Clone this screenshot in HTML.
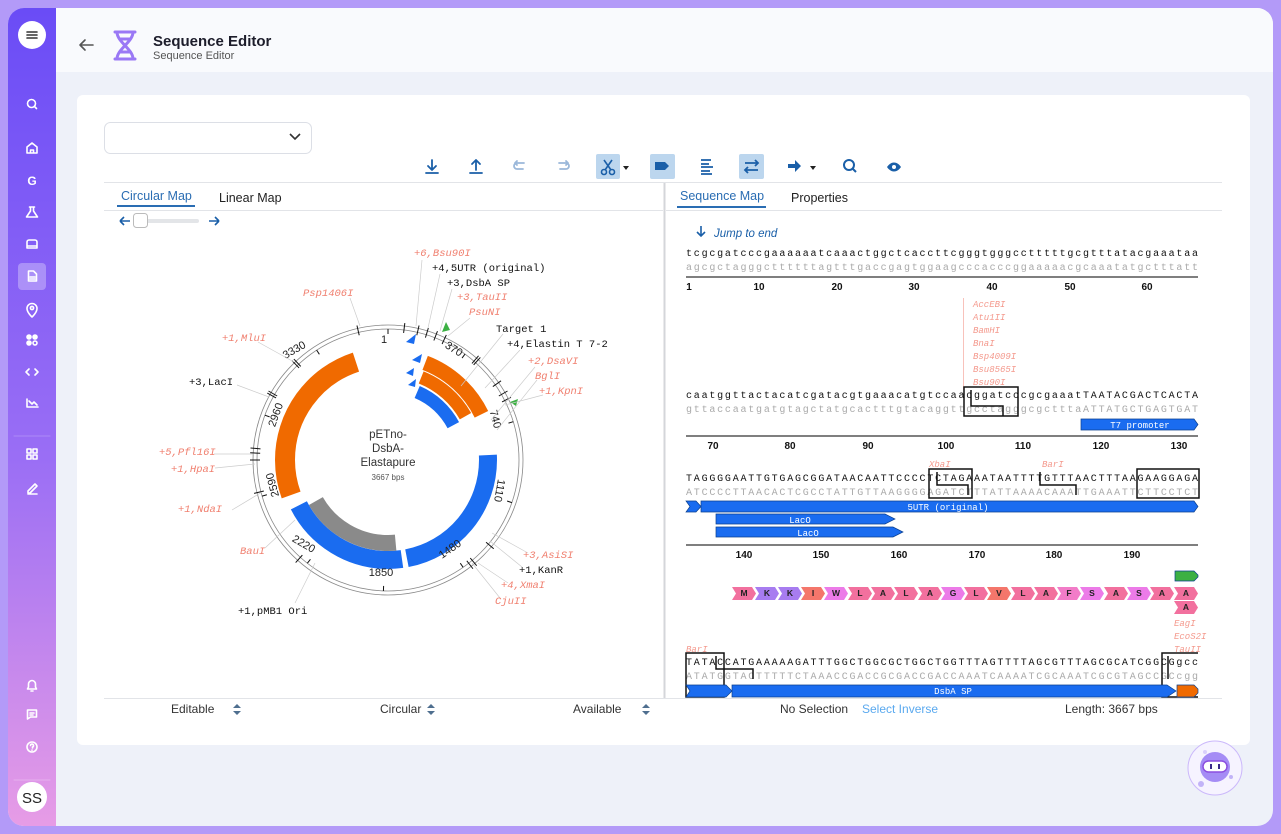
<!DOCTYPE html>
<html><head><meta charset="utf-8"><style>
*{margin:0;padding:0;box-sizing:border-box}
body{width:1281px;height:834px;overflow:hidden;background:#b39af8;font-family:"Liberation Sans",sans-serif;position:relative}
.frame{position:absolute;left:8px;top:8px;width:1265px;height:818px;border-radius:16px;overflow:hidden;background:#eef1f9}
.side{position:absolute;left:0;top:0;width:48px;height:818px;background:linear-gradient(180deg,#6a4cf6 0%,#9a6ef5 55%,#e79ce6 100%)}
.hdr{position:absolute;left:48px;top:0;right:0;height:64px;background:#f9fafd}
.card{position:absolute;left:69px;top:87px;width:1173px;height:650px;background:#fff;border-radius:6px}
</style></head><body>
<div class="frame">
<div class="side">
<svg width="48" height="818" viewBox="0 0 48 818" fill="none" stroke="#fff" stroke-width="1.6" stroke-linecap="round" stroke-linejoin="round">
<circle cx="24" cy="27" r="14" fill="#fff" stroke="none"/>
<path d="M19 24h10M19 27h10M19 30h10" stroke="#333"/>
<circle cx="23.5" cy="95.5" r="4"/><path d="M26.5 98.5l2 2"/>
<path d="M19 139l5-4 5 4v6h-10z M22.5 145v-3h3v3"/>
<text x="24" y="177" fill="#fff" stroke="none" font-size="12" text-anchor="middle" font-weight="bold" font-family="Liberation Sans">G</text>
<path d="M21.5 199h5M22.5 199v4l-4 6h11l-4-6v-4"/>
<path d="M19 238v-4a2 2 0 0 1 2-2h6a2 2 0 0 1 2 2v4h-10z M19 238v2h10v-2"/>
<rect x="10" y="255" width="28" height="27" rx="4" fill="rgba(255,255,255,.3)" stroke="none"/>
<path d="M20.5 263h5l3 3v7h-8z M22 269h5M22 271h5"/>
<path d="M24 309s-5-4.5-5-8.5a5 5 0 0 1 10 0c0 4-5 8.5-5 8.5z"/><circle cx="24" cy="300" r="1.6"/>
<circle cx="21" cy="329" r="2" fill="#fff"/><circle cx="27" cy="329" r="2" fill="#fff"/><circle cx="21" cy="335" r="2" fill="#fff"/><circle cx="27" cy="335" r="2"/>
<path d="M21 361l-3 3 3 3M27 361l3 3-3 3"/>
<path d="M19 391v8h11M21 393l3 3 2-2 3 3"/>
<line x1="6" y1="428" x2="42" y2="428" stroke="rgba(255,255,255,.2)" stroke-width="1"/>
<rect x="19" y="441" width="4" height="4"/><rect x="25" y="441" width="4" height="4"/><rect x="19" y="447" width="4" height="4"/><rect x="25" y="447" width="4" height="4"/>
<path d="M20 483l7-7 2 2-7 7h-2z M20 486h9"/>
<path d="M20.5 679v-3a3.5 3.5 0 0 1 7 0v3l1 2h-9z M23 683h2"/>
<path d="M19.5 702h9v7h-6l-3 2z M22 705h4M22 707h3"/>
<circle cx="24" cy="739" r="5"/><path d="M22.5 737.5a1.5 1.5 0 1 1 2 1.5v1M24 742v.2"/>
<line x1="6" y1="772" x2="42" y2="772" stroke="rgba(255,255,255,.25)" stroke-width="1"/>
<circle cx="24" cy="789" r="15" fill="#fff" stroke="none"/>
<text x="24" y="795" fill="#222" stroke="none" font-size="15" text-anchor="middle" font-family="Liberation Sans">SS</text>
</svg>
</div>
<div class="hdr">
<svg width="300" height="64" style="position:absolute;left:0;top:0" fill="none">
<path d="M24 37h13M24 37l5-5M24 37l5 5" stroke="#555" stroke-width="1.6" stroke-linecap="round"/>
<path d="M59 24h20M59 51h20M61 24c0 10 16 17 16 27M77 24c0 10-16 17-16 27M65 31h9M64 44h10" stroke="#9a78f5" stroke-width="3" stroke-linecap="round"/>
<text x="97" y="38" font-size="15" font-weight="bold" fill="#1d1d2b" font-family="Liberation Sans">Sequence Editor</text>
<text x="97" y="51" font-size="11" fill="#555" font-family="Liberation Sans">Sequence Editor</text>
</svg>
</div>
<div class="card"></div>
</div>

<svg width="1281" height="834" style="position:absolute;left:0;top:0" font-family="Liberation Sans">
<rect x="104.5" y="122.5" width="207" height="31" rx="6" fill="#fff" stroke="#dcdfe6"/>
<path d="M290 134l5 5 5-5" stroke="#333" stroke-width="1.6" fill="none"/>
<g fill="none" stroke="#1a5fa8" stroke-width="1.8" stroke-linecap="round" stroke-linejoin="round">
<path d="M432 160v10M428 166l4 4 4-4M426 173h12"/>
<path d="M476 170v-10M472 164l4-4 4 4M470 173h12"/>
<path d="M523 169h-6a3 3 0 0 1 0-6h7M515 163l2-2M515 163l2 2" stroke="#9bb8da"/>
<path d="M560 169h6a3 3 0 0 0 0-6h-7M568 163l-2-2M568 163l-2 2" stroke="#9bb8da"/>
</g>
<rect x="596" y="154" width="24" height="25" rx="2" fill="#bcd6ee"/>
<g fill="none" stroke="#1a5fa8" stroke-width="1.6"><circle cx="604" cy="172" r="2.5"/><circle cx="612" cy="172" r="2.5"/><path d="M605 170l7-10M611 170l-7-10"/></g>
<path d="M623 166h6l-3 4z" fill="#222"/>
<rect x="650" y="154" width="25" height="25" rx="2" fill="#bcd6ee"/>
<path d="M655 162h10l4 4-4 4h-10z" fill="#1a5fa8"/>
<g stroke="#1a5fa8" stroke-width="1.8"><path d="M701 160h10M701 164h8M701 167h12M701 171h9M701 174h11"/></g>
<rect x="739" y="154" width="25" height="25" rx="2" fill="#bcd6ee"/>
<g fill="none" stroke="#1a5fa8" stroke-width="1.8"><path d="M745 163h13M755 160l3 3-3 3M758 170h-13M748 167l-3 3 3 3"/></g>
<path d="M788 164h7v-4l6 6-6 6v-4h-7z" fill="#1a5fa8"/>
<path d="M810 166h6l-3 4z" fill="#222"/>
<circle cx="849" cy="165" r="5" fill="none" stroke="#1a5fa8" stroke-width="2"/><path d="M853 169l3 3" stroke="#1a5fa8" stroke-width="2"/>
<path d="M887 167c4-6 10-6 14 0-4 6-10 6-14 0z" fill="#1a5fa8"/><circle cx="894" cy="167" r="2" fill="#fff"/>
<line x1="104" y1="182.5" x2="1222" y2="182.5" stroke="#e2e4e8"/>
<line x1="104" y1="210.5" x2="663" y2="210.5" stroke="#e2e4e8"/>
<line x1="666" y1="210.5" x2="1222" y2="210.5" stroke="#e2e4e8"/>
<line x1="664.5" y1="183" x2="664.5" y2="698" stroke="#d4d6da" stroke-width="2"/>
<line x1="104" y1="698.5" x2="1222" y2="698.5" stroke="#e2e4e8"/>
<text x="121" y="200" font-size="12.5" fill="#2a6db3">Circular Map</text>
<rect x="117" y="205" width="78" height="2" fill="#2a6db3"/>
<text x="219" y="202" font-size="12.5" fill="#222">Linear Map</text>
<text x="680" y="200" font-size="12.5" fill="#2a6db3">Sequence Map</text>
<rect x="677" y="206" width="89" height="2" fill="#2a6db3"/>
<text x="791" y="202" font-size="12.5" fill="#222">Properties</text>
<path d="M120 221h10M120 221l4-4M120 221l4 4M219 221h-10M219 221l-4-4M219 221l-4 4" stroke="#1a5fa8" stroke-width="1.6" fill="none"/>
<rect x="140" y="219" width="59" height="4" rx="2" fill="#e3e5e8"/>
<rect x="133.5" y="213.5" width="14" height="14" rx="3" fill="#fff" stroke="#bbb"/>
<g transform="translate(388 460)">
<circle r="135" fill="none" stroke="#888" stroke-width="0.8"/>
<circle r="131" fill="none" stroke="#888" stroke-width="0.8"/>
<g transform="rotate(-90)" fill="none">
<circle r="103" stroke="#f06a00" stroke-width="20" stroke-dasharray="164.8 1000" stroke-dashoffset="-449.5"/>
<circle r="100" stroke="#1a6cf0" stroke-width="18" stroke-dasharray="124 1000" stroke-dashoffset="-300"/>
<circle r="83" stroke="#8a8a8a" stroke-width="16" stroke-dasharray="95 1000" stroke-dashoffset="-253"/>
<circle r="100" stroke="#1a6cf0" stroke-width="18" stroke-dasharray="143 1000" stroke-dashoffset="-152"/>
<circle r="104" stroke="#f06a00" stroke-width="15" stroke-dasharray="78 1000" stroke-dashoffset="-38"/>
<circle r="89" stroke="#f06a00" stroke-width="13" stroke-dasharray="60 1000" stroke-dashoffset="-34"/>
<circle r="74" stroke="#1a6cf0" stroke-width="13" stroke-dasharray="50 1000" stroke-dashoffset="-30"/>
</g>
<path d="M18 -118l10 -8 -2 10zM24 -100l10 -6 -2 9zM18 -87l8 -5 -1 8zM20 -75l8 -6 -1 8z" fill="#1a6cf0"/>
<g stroke="#111" stroke-width="1">
<line y1="-128" y2="-138" transform="rotate(7)"/><line y1="-128" y2="-138" transform="rotate(13)"/><line y1="-128" y2="-138" transform="rotate(17)"/><line y1="-128" y2="-138" transform="rotate(21)"/><line y1="-128" y2="-138" transform="rotate(25)"/>
<line y1="-128" y2="-138" transform="rotate(41)"/><line y1="-128" y2="-138" transform="rotate(42)"/><line y1="-128" y2="-138" transform="rotate(55)"/><line y1="-128" y2="-138" transform="rotate(60)"/><line y1="-128" y2="-138" transform="rotate(63)"/>
<line y1="-128" y2="-138" transform="rotate(347)"/><line y1="-128" y2="-138" transform="rotate(316)"/><line y1="-128" y2="-138" transform="rotate(317)"/><line y1="-128" y2="-138" transform="rotate(299)"/><line y1="-128" y2="-138" transform="rotate(300)"/>
<line y1="-128" y2="-138" transform="rotate(273)"/><line y1="-128" y2="-138" transform="rotate(275)"/><line y1="-128" y2="-138" transform="rotate(270)"/><line y1="-128" y2="-138" transform="rotate(256)"/><line y1="-128" y2="-138" transform="rotate(222)"/>
<line y1="-128" y2="-138" transform="rotate(130)"/><line y1="-128" y2="-138" transform="rotate(140)"/><line y1="-128" y2="-138" transform="rotate(142)"/>
<line y1="-126" y2="-131" transform="rotate(0)"/><line y1="-126" y2="-131" transform="rotate(36)"/><line y1="-126" y2="-131" transform="rotate(73)"/><line y1="-126" y2="-131" transform="rotate(109)"/><line y1="-126" y2="-131" transform="rotate(145)"/><line y1="-126" y2="-131" transform="rotate(182)"/><line y1="-126" y2="-131" transform="rotate(218)"/><line y1="-126" y2="-131" transform="rotate(254)"/><line y1="-126" y2="-131" transform="rotate(290)"/><line y1="-126" y2="-131" transform="rotate(327)"/>
</g>
<path d="M54 -128l4 -10 4 8z" fill="#3cb043"/>
<path d="M122 -58l8 -3 -2 7z" fill="#3cb043"/>
</g>
<g font-size="11" fill="#222" text-anchor="middle">
<text x="384" y="343">1</text>
<text transform="translate(296 353) rotate(-30)">3330</text>
<text transform="translate(452 352) rotate(32)">370</text>
<text transform="translate(492 420) rotate(75)">740</text>
<text transform="translate(279 416) rotate(-70)">2960</text>
<text transform="translate(276 484) rotate(-105)">2590</text>
<text transform="translate(496 490) rotate(100)">1110</text>
<text transform="translate(302 547) rotate(30)">2220</text>
<text x="381" y="576">1850</text>
<text transform="translate(452 552) rotate(-35)">1480</text>
</g>
<g text-anchor="middle" fill="#333"><text x="388" y="438" font-size="11.5">pETno-</text><text x="388" y="452" font-size="11.5">DsbA-</text><text x="388" y="466" font-size="11.5">Elastapure</text><text x="388" y="480" font-size="8" fill="#555">3667 bps</text></g>
<g stroke="#ccc" stroke-width="0.7" fill="none">
<path d="M422 260l-6 66M440 274l-12 54M452 289l-12 42M470 318l-22 18M503 334l-42 52M520 350l-35 38M535 367l-44 53M537 380l-40 50M543 395l-38 10M350 298l10 28M258 342l36 20M237 385l32 12M214 454l40 0M215 468l40 -4M232 510l30 -18M265 548l30 -28M295 603l20 -40M528 553l-36 -20M522 567l-32 -26M508 583l-30 -20M500 598l-28 -35"/>
</g>
<g font-family="Liberation Mono" font-size="10.5">
<g fill="#f08070" font-style="italic">
<text x="414" y="256">+6,Bsu90I</text><text x="457" y="300">+3,TauII</text><text x="469" y="315">PsuNI</text>
<text x="528" y="364">+2,DsaVI</text><text x="535" y="379">BglI</text><text x="539" y="394">+1,KpnI</text>
<text x="303" y="296">Psp1406I</text><text x="222" y="341">+1,MluI</text><text x="159" y="455">+5,Pfl16I</text>
<text x="171" y="472">+1,HpaI</text><text x="178" y="512">+1,NdaI</text><text x="240" y="554">BauI</text>
<text x="523" y="558">+3,AsiSI</text><text x="501" y="588">+4,XmaI</text><text x="495" y="604">CjuII</text>
</g>
<g fill="#111">
<text x="432" y="271">+4,5UTR (original)</text><text x="447" y="286">+3,DsbA SP</text><text x="496" y="332">Target 1</text>
<text x="507" y="347">+4,Elastin T 7-2</text><text x="189" y="385">+3,LacI</text><text x="238" y="614">+1,pMB1 Ori</text><text x="519" y="573">+1,KanR</text>
</g>
</g>
<path d="M701 226v10M697 232l4 4 4-4" stroke="#1a5fa8" stroke-width="1.6" fill="none"/>
<text x="714" y="237" font-size="11.5" font-style="italic" fill="#1a5fa8">Jump to end</text>
<g font-family="Liberation Mono" font-size="10">
<text x="686" y="256" textLength="512" lengthAdjust="spacing" fill="#111">tcgcgatcccgaaaaaatcaaactggctcaccttcgggtgggcctttttgcgtttatacgaaataa</text>
<text x="686" y="270" textLength="512" lengthAdjust="spacing" fill="#aaa">agcgctagggcttttttagtttgaccgagtggaagcccacccggaaaaacgcaaatatgctttatt</text>
<text x="686" y="398" textLength="512" lengthAdjust="spacing" fill="#111">caatggttactacatcgatacgtgaaacatgtccaacggatcccgcgaaatTAATACGACTCACTA</text>
<text x="686" y="412" textLength="512" lengthAdjust="spacing" fill="#aaa">gttaccaatgatgtagctatgcactttgtacaggttgcctagggcgctttaATTATGCTGAGTGAT</text>
<text x="686" y="481" textLength="512" lengthAdjust="spacing" fill="#111">TAGGGGAATTGTGAGCGGATAACAATTCCCCTCTAGAAATAATTTTGTTTAACTTTAAGAAGGAGA</text>
<text x="686" y="495" textLength="512" lengthAdjust="spacing" fill="#aaa">ATCCCCTTAACACTCGCCTATTGTTAAGGGGAGATCTTTATTAAAACAAATTGAAATTCTTCCTCT</text>
<text x="686" y="665" textLength="512" lengthAdjust="spacing" fill="#111">TATACCATGAAAAAGATTTGGCTGGCGCTGGCTGGTTTAGTTTTAGCGTTTAGCGCATCGGCGgcc</text>
<text x="686" y="679" textLength="512" lengthAdjust="spacing" fill="#aaa">ATATGGTACTTTTTCTAAACCGACCGCGACCGACCAAATCAAAATCGCAAATCGCGTAGCCGCcgg</text>
</g>
<g stroke="#333" stroke-width="1.2"><line x1="686" y1="277" x2="1198" y2="277"/><line x1="686" y1="436" x2="1198" y2="436"/><line x1="686" y1="545" x2="1198" y2="545"/></g>
<g font-size="10" font-weight="bold" fill="#111" text-anchor="middle">
<text x="689" y="290">1</text><text x="759" y="290">10</text><text x="837" y="290">20</text><text x="914" y="290">30</text><text x="992" y="290">40</text><text x="1070" y="290">50</text><text x="1147" y="290">60</text>
<text x="713" y="449">70</text><text x="790" y="449">80</text><text x="868" y="449">90</text><text x="946" y="449">100</text><text x="1023" y="449">110</text><text x="1101" y="449">120</text><text x="1179" y="449">130</text>
<text x="744" y="558">140</text><text x="821" y="558">150</text><text x="899" y="558">160</text><text x="977" y="558">170</text><text x="1054" y="558">180</text><text x="1132" y="558">190</text>
</g>
<g font-family="Liberation Mono" font-size="9" font-style="italic" fill="#f49a8e">
<text x="973" y="307">AccEBI</text><text x="973" y="320">Atu1II</text><text x="973" y="333">BamHI</text><text x="973" y="346">BnaI</text><text x="973" y="359">Bsp4009I</text><text x="973" y="372">Bsu8565I</text><text x="973" y="385">Bsu90I</text>
<text x="929" y="467">XbaI</text><text x="1042" y="467">BarI</text>
<text x="1174" y="626">EagI</text><text x="1174" y="639">EcoS2I</text><text x="1174" y="652">TauII</text><text x="686" y="652">BarI</text>
</g>
<line x1="963.5" y1="298" x2="963.5" y2="390" stroke="#f6b3aa" stroke-width="0.8"/>
<g fill="none" stroke="#111" stroke-width="1.5">
<rect x="964" y="387" width="54" height="29"/><path d="M971 390v16h32v10"/>
<rect x="929" y="469" width="43" height="29"/><path d="M937 472v13h31v10"/><path d="M1040 472v13h36v10"/>
<rect x="1137" y="469" width="62" height="29"/>
<rect x="686" y="653" width="38" height="44"/><path d="M716 656v13h37v10"/>
<path d="M1198 653h-36v44h36M1168 656v23"/>
</g>
<g font-size="9" fill="#fff" text-anchor="middle" stroke="#0a3f8e" stroke-width="0.7">
<path d="M1081 419h113l4 5.5-4 5.5h-113z" fill="#1a6cf0"/>
<path d="M686 501h10l5 5.5-5 5.5h-10l4-5.5z" fill="#1a6cf0"/>
<path d="M701 501h493l4 5.5-4 5.5h-493z" fill="#1a6cf0"/>
<path d="M716 514h169l10 5-10 5h-169z" fill="#1a6cf0"/>
<path d="M716 527h177l10 5-10 5h-177z" fill="#1a6cf0"/>
<path d="M686 685h40l6 6-6 6h-40l4-6z" fill="#1a6cf0"/>
<path d="M732 685h435l9 6-9 6h-435z" fill="#1a6cf0"/>
<path d="M1177 685h17l4 4v4l-4 4h-17z" fill="#f06a00"/>
<path d="M1175 571h19l4 4v2l-4 4h-19z" fill="#3cb043"/>
</g>
<g font-size="9" fill="#fff" text-anchor="middle" font-family="Liberation Mono">
<text x="1140" y="428">T7 promoter</text><text x="948" y="510">5UTR (original)</text><text x="800" y="523">LacO</text><text x="808" y="536">LacO</text><text x="953" y="694">DsbA SP</text>
</g>
<g font-size="8.5" font-weight="bold" fill="#222" text-anchor="middle">
<path d="M732 587h20l4 6.5-4 6.5h-20l4-6.5z" fill="#f2709e"/><text x="744" y="596">M</text>
<path d="M755 587h20l4 6.5-4 6.5h-20l4-6.5z" fill="#a77cf0"/><text x="767" y="596">K</text>
<path d="M778 587h20l4 6.5-4 6.5h-20l4-6.5z" fill="#a77cf0"/><text x="790" y="596">K</text>
<path d="M801 587h20l4 6.5-4 6.5h-20l4-6.5z" fill="#f4766b"/><text x="813" y="596">I</text>
<path d="M824 587h20l4 6.5-4 6.5h-20l4-6.5z" fill="#ec7be8"/><text x="836" y="596">W</text>
<path d="M848 587h20l4 6.5-4 6.5h-20l4-6.5z" fill="#f2709e"/><text x="860" y="596">L</text>
<path d="M871 587h20l4 6.5-4 6.5h-20l4-6.5z" fill="#f2709e"/><text x="883" y="596">A</text>
<path d="M894 587h20l4 6.5-4 6.5h-20l4-6.5z" fill="#f2709e"/><text x="906" y="596">L</text>
<path d="M918 587h20l4 6.5-4 6.5h-20l4-6.5z" fill="#f2709e"/><text x="930" y="596">A</text>
<path d="M941 587h20l4 6.5-4 6.5h-20l4-6.5z" fill="#ec7be8"/><text x="953" y="596">G</text>
<path d="M964 587h20l4 6.5-4 6.5h-20l4-6.5z" fill="#f2709e"/><text x="976" y="596">L</text>
<path d="M987 587h20l4 6.5-4 6.5h-20l4-6.5z" fill="#f4766b"/><text x="999" y="596">V</text>
<path d="M1011 587h20l4 6.5-4 6.5h-20l4-6.5z" fill="#f2709e"/><text x="1023" y="596">L</text>
<path d="M1034 587h20l4 6.5-4 6.5h-20l4-6.5z" fill="#f2709e"/><text x="1046" y="596">A</text>
<path d="M1057 587h20l4 6.5-4 6.5h-20l4-6.5z" fill="#f27cc8"/><text x="1069" y="596">F</text>
<path d="M1080 587h20l4 6.5-4 6.5h-20l4-6.5z" fill="#ec7be8"/><text x="1092" y="596">S</text>
<path d="M1104 587h20l4 6.5-4 6.5h-20l4-6.5z" fill="#f2709e"/><text x="1116" y="596">A</text>
<path d="M1127 587h20l4 6.5-4 6.5h-20l4-6.5z" fill="#ec7be8"/><text x="1139" y="596">S</text>
<path d="M1150 587h20l4 6.5-4 6.5h-20l4-6.5z" fill="#f2709e"/><text x="1162" y="596">A</text>
<path d="M1174 587h20l4 6.5-4 6.5h-20l4-6.5z" fill="#f2709e"/><text x="1186" y="596">A</text>
<path d="M1174 601h20l4 6.5-4 6.5h-20l4-6.5z" fill="#f2709e"/><text x="1186" y="610">A</text>
</g>
<g font-size="12" fill="#333">
<text x="171" y="713">Editable</text><text x="380" y="713">Circular</text><text x="573" y="713">Available</text>
<text x="780" y="713">No Selection</text><text x="1065" y="713">Length: 3667 bps</text>
</g>
<text x="862" y="713" font-size="12" fill="#5aa9ef">Select Inverse</text>
<g fill="#4f6f8f"><path d="M233 708l4-4 4 4zM233 711l4 4 4-4z"/><path d="M427 708l4-4 4 4zM427 711l4 4 4-4z"/><path d="M642 708l4-4 4 4zM642 711l4 4 4-4z"/></g>
<circle cx="1215" cy="768" r="27" fill="#f6f3ff" stroke="#cbb8fb"/>
<circle cx="1215" cy="767" r="15" fill="#a58cf5"/>
<circle cx="1201" cy="784" r="3" fill="#c2b3f8"/><circle cx="1231" cy="777" r="2" fill="#c2b3f8"/><circle cx="1205" cy="752" r="2" fill="#d9cffb"/>
<rect x="1203" y="761" width="24" height="11" rx="5.5" fill="#fff" stroke="#8c4fe0" stroke-width="1.5"/>
<rect x="1210" y="764" width="2" height="5" fill="#3a2a8a"/><rect x="1218" y="764" width="2" height="5" fill="#3a2a8a"/>
</svg>
</body></html>
